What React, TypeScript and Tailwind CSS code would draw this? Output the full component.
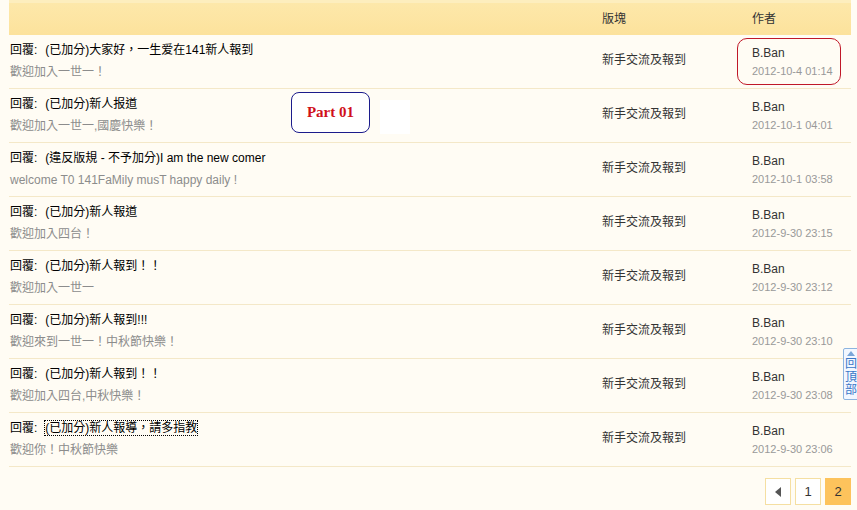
import React from "react";

type Post = {
  title: string;
  desc: string;
  date: string;
  focus?: boolean;
};

const posts: Post[] = [
  { title: "(已加分)大家好，一生爱在141新人報到", desc: "歡迎加入一世一！", date: "2012-10-4 01:14" },
  { title: "(已加分)新人报道", desc: "歡迎加入一世一,國慶快樂！", date: "2012-10-1 04:01" },
  { title: "(違反版規 - 不予加分)I am the new comer", desc: "welcome T0 141FaMily musT happy daily !", date: "2012-10-1 03:58" },
  { title: "(已加分)新人報道", desc: "歡迎加入四台！", date: "2012-9-30 23:15" },
  { title: "(已加分)新人報到！！", desc: "歡迎加入一世一", date: "2012-9-30 23:12" },
  { title: "(已加分)新人報到!!!", desc: "歡迎來到一世一！中秋節快樂！", date: "2012-9-30 23:10" },
  { title: "(已加分)新人報到！！", desc: "歡迎加入四台,中秋快樂！", date: "2012-9-30 23:08" },
  { title: "(已加分)新人報導，請多指教", desc: "歡迎你！中秋節快樂", date: "2012-9-30 23:06", focus: true },
];

const font = { fontFamily: "'Liberation Sans', 'Noto Sans CJK TC', sans-serif" };

export default function App() {
  return (
    <div className="relative min-h-[510px] w-[857px] bg-[#fffcf4] text-[12px]" style={font}>
      <div className="ml-[9px] w-[842px]">
        {/* header */}
        <div className="flex h-[35px] items-center border-t-[3px] border-[#fdeebe] bg-gradient-to-b from-[#fde8aa] to-[#fce29c] text-[#333]">
          <div className="w-[593px]" />
          <div className="w-[150px]">版塊</div>
          <div>作者</div>
        </div>

        {posts.map((p, i) => (
          <div key={i} className="flex h-[54px] border-b border-[#f4e8c8]">
            <div className="flex w-[593px] flex-col pl-[1px] pt-[6px]">
              <div className="leading-[18px] text-black">
                回覆:
                <span className={"ml-[8px] " + (p.focus ? "outline-1 outline-dotted outline-black" : "")}>{p.title}</span>
              </div>
              <div className="mt-[4px] leading-[18px] text-[#8c8c8c]">{p.desc}</div>
            </div>
            <div className="w-[150px] pt-[16px] leading-[18px] text-[#333]">新手交流及報到</div>
            <div className="flex flex-col pt-[9px] leading-[18px]">
              <div className="text-[#333]">B.Ban</div>
              <div className="text-[11px] text-[#999]">{p.date}</div>
            </div>
          </div>
        ))}

        {/* pagination */}
        <div className="mt-[11px] flex justify-end gap-[4px]">
          <button className="flex h-[27px] w-[26px] items-center justify-center border border-[#f5dfa2] bg-white">
            <svg width="6" height="10" viewBox="0 0 6 10">
              <path d="M6 0 L0 5 L6 10 Z" fill="#555" />
            </svg>
          </button>
          <button className="h-[27px] w-[26px] border border-[#f5dfa2] bg-white text-[13px] text-[#333]">1</button>
          <button className="h-[27px] w-[26px] bg-[#fdc35c] text-[13px] text-[#333]">2</button>
        </div>
      </div>

      {/* annotation overlays */}
      <div className="absolute left-[291px] top-[92px] flex h-[41px] w-[79px] items-center justify-center rounded-[8px] border border-[#1c1c8c] bg-white">
        <span className="text-[15px] font-bold text-[#d0101a]" style={{ fontFamily: "'Liberation Serif', serif" }}>
          Part 01
        </span>
      </div>
      <div className="absolute left-[380px] top-[100px] h-[34px] w-[30px] bg-white" />
      <div className="absolute left-[737px] top-[38px] h-[47px] w-[104px] rounded-[10px] border border-[#c01828]" />

      {/* back to top */}
      <div className="absolute left-[843px] top-[348px] flex w-[16px] flex-col items-center rounded-l-[2px] border border-[#8cb4e0] bg-[#f2f7ff] pb-[2px] text-[12px] leading-[13px] text-[#3a78c8]">
        <svg width="8" height="5" viewBox="0 0 8 5" className="my-[2px]">
          <path d="M0 5 L4 0 L8 5 Z" fill="#7aa6d8" />
        </svg>
        <span>回</span>
        <span>頂</span>
        <span>部</span>
      </div>
    </div>
  );
}
